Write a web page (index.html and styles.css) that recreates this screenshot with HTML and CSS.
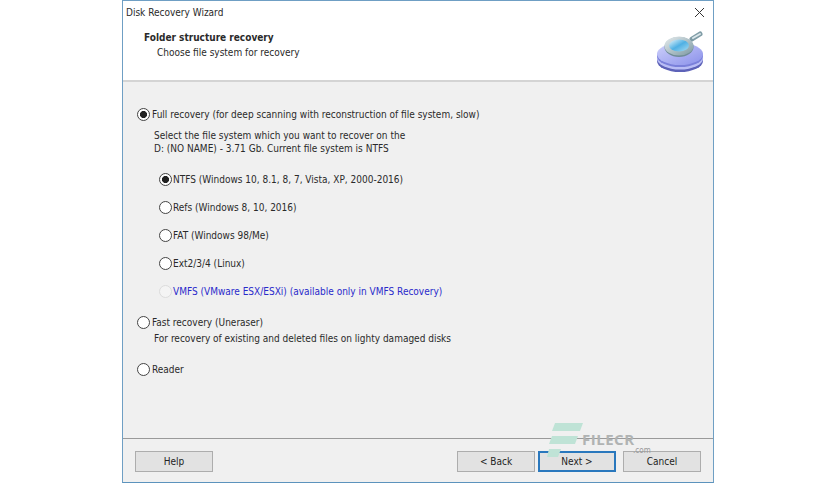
FILE: index.html
```html
<!DOCTYPE html>
<html lang="en">
<head>
<meta charset="utf-8">
<title>Disk Recovery Wizard</title>
<link rel="stylesheet" href="styles.css">
</head>
<body>
<div class="window">
  <div class="titlebar">
    <span class="title">Disk Recovery Wizard</span>
    <svg class="close" width="11" height="11" viewBox="0 0 11 11"><path d="M1 1 10 10M10 1 1 10" stroke="#333" stroke-width="1" fill="none"/></svg>
  </div>
  <header class="head">
    <div class="head-text">
      <div class="head-title">Folder structure recovery</div>
      <div class="head-sub">Choose file system for recovery</div>
    </div>
    <svg class="logo" width="48" height="44" viewBox="0 0 48 44">
      <defs>
        <linearGradient id="disk" x1="0" y1="0" x2="1" y2="1"><stop offset="0" stop-color="#cfd2fb"/><stop offset="1" stop-color="#8a90ea"/></linearGradient>
        <linearGradient id="lens" x1="0" y1="0" x2="1" y2="1"><stop offset="0" stop-color="#e8f6fb"/><stop offset=".5" stop-color="#4fb0e4"/><stop offset="1" stop-color="#a9dcf2"/></linearGradient>
        <linearGradient id="rim" x1="0" y1="0" x2="1" y2="1"><stop offset="0" stop-color="#e6ecee"/><stop offset="1" stop-color="#7b98a2"/></linearGradient>
      </defs>
      <ellipse cx="24" cy="31" rx="23" ry="11" fill="#5d62b8"/>
      <ellipse cx="24" cy="28.500" rx="23" ry="11" fill="#b9bdf5"/>
      <ellipse cx="24" cy="26" rx="23" ry="11" fill="#7a80da"/>
      <ellipse cx="24" cy="24" rx="23" ry="11" fill="url(#disk)"/>
      <path d="M36 9 44 4" stroke="#7f9ca6" stroke-width="5" stroke-linecap="round"/>
      <path d="M37 8 44 4" stroke="#dbe6ea" stroke-width="2" stroke-linecap="round"/>
      <ellipse cx="23" cy="17" rx="14.500" ry="10" fill="#6f8c97"/>
      <ellipse cx="23" cy="16" rx="14.500" ry="9.500" fill="url(#rim)"/>
      <ellipse cx="23" cy="15.500" rx="10" ry="6" fill="url(#lens)"/>
    </svg>
  </header>
  <main class="content">
    <div class="option"><span class="radio checked"></span>Full recovery (for deep scanning with reconstruction of file system, slow)</div>
    <p class="note note-full">Select the file system which you want to recover on the<br>D: (NO NAME) - 3.71 Gb. Current file system is NTFS</p>
    <div class="fs-list">
      <div class="option"><span class="radio checked"></span>NTFS (Windows 10, 8.1, 8, 7, Vista, XP, 2000-2016)</div>
      <div class="option"><span class="radio"></span>Refs (Windows 8, 10, 2016)</div>
      <div class="option"><span class="radio"></span>FAT (Windows 98/Me)</div>
      <div class="option"><span class="radio"></span>Ext2/3/4 (Linux)</div>
      <div class="option disabled"><span class="radio"></span>VMFS (VMware ESX/ESXi) (available only in VMFS Recovery)</div>
    </div>
    <div class="option fast"><span class="radio"></span>Fast recovery (Uneraser)</div>
    <p class="note note-fast">For recovery of existing and deleted files on lighty damaged disks</p>
    <div class="option reader"><span class="radio"></span>Reader</div>
  </main>
  <footer class="foot">
    <button class="btn">Help</button>
    <div class="nav">
      <button class="btn">&lt; Back</button>
      <button class="btn primary">Next &gt;</button>
      <button class="btn cancel">Cancel</button>
    </div>
  </footer>
  <div class="mark">
    <svg width="36" height="36" viewBox="0 0 36 36"><path d="M8 0H36L33 8H5ZM5 13H31L28 21H2ZM2 26H14L11 34H0Z" fill="#bfe3d6"/></svg>
    <span class="mark-name">FILECR</span>
    <span class="mark-com">.com</span>
  </div>
</div>
</body>
</html>
```
FILE: styles.css
```css
* { box-sizing: border-box; }
html, body { margin: 0; padding: 0; background: #fff; }
body { height: 484px; overflow: hidden; font: 10px/13px "DejaVu Sans", sans-serif; font-stretch: condensed; color: #2a2a2a; }
.window {
  position: relative;
  width: 592px;
  height: 483px;
  margin-left: 122px;
  border: 1px solid #6f9fc4;
  border-top: 0;
  background: #f0f0f0;
  display: flex;
  flex-direction: column;
  border-bottom: 1px solid #5c93bd;
}
.titlebar {
  height: 24px;
  background: #fff;
  display: flex;
  align-items: center;
  justify-content: space-between;
  padding: 0 8px 0 3px;
  border-top: 1px solid #6f9fc4;
}
.close { display: block; }
.head {
  height: 58px;
  background: #fff;
  border-bottom: 2px solid #d4d4d4;
  display: flex;
  justify-content: space-between;
  padding: 7px 9px 0 21px;
}
.head-title { font-weight: 700; }
.head-sub { margin: 2px 0 0 13px; }
.logo { display: block; margin-top: -1px; }
.content { flex: 1; padding: 25px 0 0 14px; }
.option { display: flex; align-items: center; height: 14px; white-space: nowrap; }
.radio {
  width: 13px;
  height: 13px;
  margin-right: 2px;
  border: 1px solid #444;
  border-radius: 50%;
  background: #fff;
  flex: none;
  display: block;
}
.radio.checked { background: radial-gradient(circle, #222 0 3.300px, #fff 3.800px); }
.fs-list .radio { margin-right: 1px; }
.note { margin: 0; line-height: 13px; }
.note-full { margin: 8px 0 0 17px; }
.fs-list { margin: 17px 0 0 22px; display: flex; flex-direction: column; gap: 14px; }
.disabled { color: #2a2acb; }
.disabled .radio { border-color: #dcdcdc; background: #f4f4f4; }
.fast { margin-top: 17px; }
.note-fast { margin: 3px 0 0 17px; }
.reader { margin-top: 17px; }
.foot {
  height: 44px;
  border-top: 1px solid #9a9a9a;
  display: flex;
  justify-content: space-between;
  padding: 12px 12px 0 12px;
}
.nav { display: flex; }
.btn {
  width: 78px;
  height: 21px;
  padding: 0;
  font: inherit;
  font-stretch: condensed;
  color: #222;
  background: #e2e2e2;
  border: 1px solid #adadad;
}
.primary { margin-left: 3px; border: 2px solid #2a78bd; }
.cancel { margin-left: 7px; }
.mark { position: absolute; left: 424px; top: 423px; width: 130px; height: 36px; pointer-events: none; }
.mark svg { position: absolute; left: 0; top: 0; }
.mark-name { position: absolute; left: 35px; top: 9px; font: 700 15px/14px "Open Sans", sans-serif; letter-spacing: .5px; color: #b0b3b3; }
.mark-com { position: absolute; left: 86px; top: 23px; font-size: 8px; line-height: 9px; color: #999; }
```
